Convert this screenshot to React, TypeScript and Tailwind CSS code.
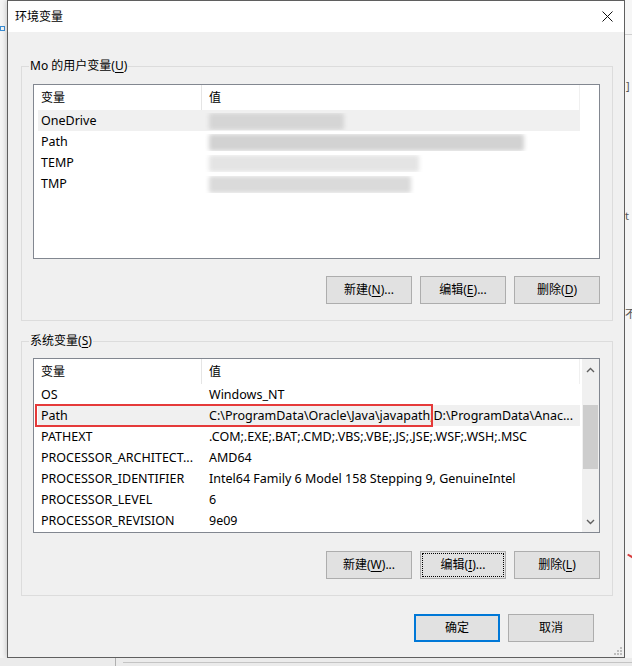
import React from 'react';

type Row = { name: string; value?: string; blur?: { w: number; c: string } };

const userRows: Row[] = [
  { name: 'OneDrive', blur: { w: 135, c: '#d5d5d5' } },
  { name: 'Path', blur: { w: 315, c: '#d2d2d2' } },
  { name: 'TEMP', blur: { w: 210, c: '#e4e4e4' } },
  { name: 'TMP', blur: { w: 202, c: '#dadada' } },
];

const sysRows: Row[] = [
  { name: 'OS', value: 'Windows_NT' },
  { name: 'Path', value: 'C:\\ProgramData\\Oracle\\Java\\javapath;D:\\ProgramData\\Anac...' },
  { name: 'PATHEXT', value: '.COM;.EXE;.BAT;.CMD;.VBS;.VBE;.JS;.JSE;.WSF;.WSH;.MSC' },
  { name: 'PROCESSOR_ARCHITECT...', value: 'AMD64' },
  { name: 'PROCESSOR_IDENTIFIER', value: 'Intel64 Family 6 Model 158 Stepping 9, GenuineIntel' },
  { name: 'PROCESSOR_LEVEL', value: '6' },
  { name: 'PROCESSOR_REVISION', value: '9e09' },
];

function Key({ text, k, tail = '' }: { text: string; k: string; tail?: string }) {
  return (
    <>
      {text}(<span className="underline underline-offset-2">{k}</span>){tail}
    </>
  );
}

function Btn({ children, focus, primary }: { children: React.ReactNode; focus?: boolean; primary?: boolean }) {
  return (
    <button
      className={
        'h-[28px] w-[86px] bg-[#e1e1e1] text-[12px] leading-none text-black ' +
        (primary ? 'border-2 border-[#0078d7] ' : 'border border-[#adadad] ') +
        (focus ? 'outline-1 outline-dotted outline-black -outline-offset-3' : '')
      }
    >
      {children}
    </button>
  );
}

function ListRows({ rows, selected }: { rows: Row[]; selected: number }) {
  return (
    <>
      <div className="flex h-[25px] items-center text-[12px]">
        <div className="flex h-full w-[168px] items-center border-r border-[#e5e5e5] pl-[7px]">变量</div>
        <div className="flex h-full w-[378px] items-center border-r border-[#f0f0f0] pl-[7px]">值</div>
      </div>
      {rows.map((r, i) => (
        <div key={r.name} className="pl-[4px]">
          <div className={'flex h-[21px] w-[542px] items-center pt-px ' + (i === selected ? 'bg-[#f0f0f0]' : '')}>
            <div className="w-[164px] overflow-hidden whitespace-nowrap pl-[3px]">{r.name}</div>
            <div className="w-[378px] overflow-hidden whitespace-nowrap pl-[7px]">
              {r.blur ? (
                <div className="h-[17px] rounded-[2px] blur-[2px]" style={{ width: r.blur.w, background: r.blur.c }} />
              ) : (
                r.value
              )}
            </div>
          </div>
        </div>
      ))}
    </>
  );
}

function Chevron({ up }: { up?: boolean }) {
  return (
    <svg width="9" height="6" viewBox="0 0 9 6">
      <path d={up ? 'M1 5 L4.5 1.5 L8 5' : 'M1 1 L4.5 4.5 L8 1'} fill="none" stroke="#606060" strokeWidth="1.4" />
    </svg>
  );
}

function Group({ legend, tight, children }: { legend: React.ReactNode; tight?: boolean; children: React.ReactNode }) {
  return (
    <fieldset className="border border-[#dcdcdc]">
      <legend className="ml-[7px] px-[1px] text-[12px] leading-[16px]">{legend}</legend>
      <div className={'px-[11px] pb-[16px] ' + (tight ? 'pt-[9px]' : 'pt-[10px]')}>{children}</div>
    </fieldset>
  );
}

export default function App() {
  return (
    <div className="relative flex h-[666px] w-[632px] overflow-hidden bg-[#ededed] font-['Noto_Sans','Noto_Sans_CJK_SC',sans-serif] text-[12.5px] text-black">
      {/* left strip of the window behind */}
      <div className="w-[7px] bg-[#f5f5f5] pt-[26px]">
        <div className="h-[5px] w-[5px] border border-[#3b8fd6]" />
      </div>

      <div className="relative flex h-[658px] w-[618px] flex-col border border-[#5f5f5f] bg-[#f0f0f0] shadow-[0_0_6px_rgba(0,0,0,0.25)]">
        <div className="flex h-[31px] items-center justify-between bg-white pl-[7px] pr-[11px]">
          <span className="text-[12px]">环境变量</span>
          <svg width="11" height="11" viewBox="0 0 11 11">
            <path d="M0.5 0.5 L10.5 10.5 M10.5 0.5 L0.5 10.5" stroke="#111" strokeWidth="1" />
          </svg>
        </div>

        <div className="flex flex-col pl-[13px] pr-[11px] pt-[26px]">
          <Group legend={<Key text="Mo 的用户变量" k="U" />}>
            <div className="h-[175px] w-[567px] border border-[#828790] bg-white">
              <ListRows rows={userRows} selected={0} />
            </div>
            <div className="mt-[17px] flex justify-end gap-[8px] pr-[1px]">
              <Btn><Key text="新建" k="N" tail="..." /></Btn>
              <Btn><Key text="编辑" k="E" tail="..." /></Btn>
              <Btn><Key text="删除" k="D" /></Btn>
            </div>
          </Group>

          <div className="mt-[12px]">
            <Group legend={<Key text="系统变量" k="S" />} tight>
              <div className="relative flex h-[175px] w-[567px] border border-[#828790] bg-white">
                <div className="flex-1">
                  <ListRows rows={sysRows} selected={1} />
                </div>
                <div className="flex w-[17px] flex-col bg-[#f0f0f0]">
                  <div className="flex h-[21px] items-center justify-center"><Chevron up /></div>
                  <div className="h-[25px]" />
                  <div className="mx-[1px] h-[64px] bg-[#cdcdcd]" />
                  <div className="flex-1" />
                  <div className="flex h-[20px] items-center justify-center"><Chevron /></div>
                </div>
                <div className="pointer-events-none absolute left-[1px] top-[45px] h-[23px] w-[398px] border-2 border-[#e53a3a]" />
              </div>
              <div className="mt-[18px] flex justify-end gap-[8px] pr-[1px]">
                <Btn><Key text="新建" k="W" tail="..." /></Btn>
                <Btn focus><Key text="编辑" k="I" tail="..." /></Btn>
                <Btn><Key text="删除" k="L" /></Btn>
              </div>
            </Group>
          </div>

          <div className="mr-[19px] mt-[18px] flex justify-end gap-[8px]">
            <Btn primary>确定</Btn>
            <Btn>取消</Btn>
          </div>
        </div>

        {/* size grip */}
        <svg className="absolute bottom-[2px] right-[2px]" width="8" height="8" viewBox="0 0 8 8">
          <g fill="#bdbdbd">
            <rect x="6" y="0" width="2" height="2" />
            <rect x="3" y="3" width="2" height="2" />
            <rect x="6" y="3" width="2" height="2" />
            <rect x="0" y="6" width="2" height="2" />
            <rect x="3" y="6" width="2" height="2" />
            <rect x="6" y="6" width="2" height="2" />
          </g>
        </svg>
      </div>

      {/* right strip of the window behind */}
      <div className="relative w-[7px] bg-[#f6f6f6] text-[11px] text-[#555]">
        <div className="mt-[34px] h-px bg-[#d0d0d0]" />
        <div className="absolute left-[1px] top-[78px]">]</div>
        <div className="absolute left-0 top-[208px]">t</div>
        <div className="absolute left-0 top-[305px] font-['Noto_Sans_CJK_SC']">不</div>
        <div className="absolute left-[2px] top-[556px] h-[2px] w-[10px] rotate-[30deg] bg-[#d83b3b]" />
      </div>

      {/* strip below the dialog */}
      <div className="absolute bottom-0 left-0 flex h-[8px] w-[632px] bg-[#ebebeb]">
        <div className="ml-[115px] w-px bg-[#b0b0b0]" />
        <div className="ml-[7px] mt-[4px] h-px flex-1 bg-[#c4c4c4]" />
      </div>
    </div>
  );
}
